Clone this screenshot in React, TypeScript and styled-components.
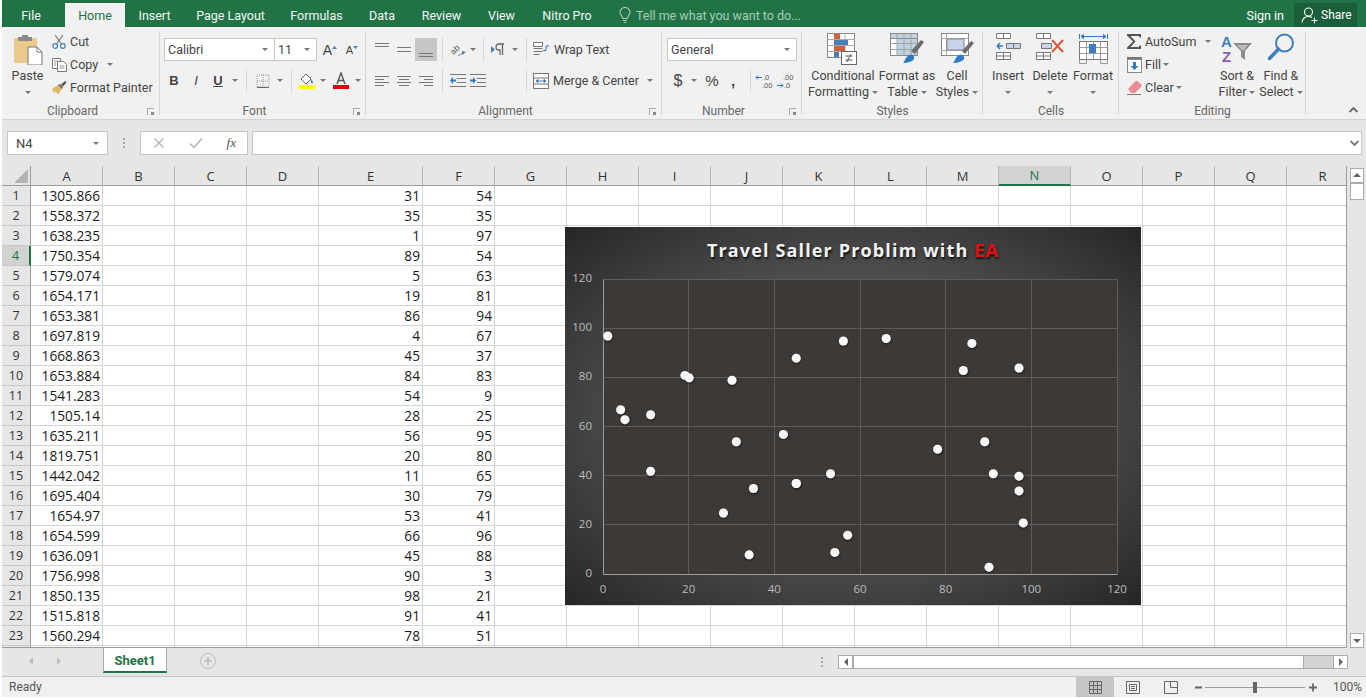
import React from 'react'
import styled, { createGlobalStyle } from 'styled-components'

const UI_FONT = 'Roboto, "Noto Sans", sans-serif'
const GREEN = '#217346'

const GlobalStyle = createGlobalStyle`
  html, body {
    margin: 0;
    padding: 0;
    background: #fff;
    overflow: hidden;
  }
`

const Window = styled.div`
  width: 1364px;
  height: 698px;
  margin-left: 2px;
  display: flex;
  flex-direction: column;
  overflow: hidden;
  font-family: ${UI_FONT};
  font-size: 12.5px;
  color: #444;
`

/* title tabs */
const TabBar = styled.div`
  height: 27px;
  flex: none;
  display: flex;
  align-items: flex-end;
  background: ${GREEN};
  color: #fff;
`

const Tab = styled.div<{ $w: number; $active?: boolean; $gap?: number }>`
  width: ${p => p.$w}px;
  margin-right: ${p => p.$gap ?? 0}px;
  height: 24px;
  display: flex;
  align-items: center;
  justify-content: center;
  font-size: 12.5px;
  background: ${p => (p.$active ? '#f1f1f1' : 'transparent')};
  color: ${p => (p.$active ? GREEN : '#f4f8f5')};
`

const TellMe = styled.div`
  height: 24px;
  padding-left: 13px;
  box-sizing: border-box;
  display: flex;
  align-items: center;
  gap: 5px;
  color: #a9cdb8;
`

const Spacer = styled.div`
  flex: 1;
`

const SignIn = styled.div`
  height: 24px;
  display: flex;
  align-items: center;
  margin-right: 10px;
`

const ShareButton = styled.div`
  width: 63px;
  height: 24px;
  margin-right: 9px;
  padding-left: 7px;
  box-sizing: border-box;
  display: flex;
  align-items: center;
  gap: 2px;
  font-size: 12px;
  background: #1b5e3a;
`

/* ribbon */
const Ribbon = styled.div`
  height: 93px;
  flex: none;
  box-sizing: border-box;
  display: flex;
  background: #f1f1f1;
  border-bottom: 1px solid #d2d2d2;
  position: relative;
`

const Group = styled.div<{ $w: number }>`
  width: ${p => p.$w}px;
  flex: none;
  display: flex;
  flex-direction: column;
  position: relative;
  &::after {
    content: '';
    position: absolute;
    right: 0;
    top: 4px;
    bottom: 4px;
    width: 1px;
    background: #d6d6d6;
  }
`

const GroupBody = styled.div<{ $pl?: number }>`
  height: 76px;
  display: flex;
  padding-left: ${p => p.$pl ?? 0}px;
`

const GroupLabel = styled.div<{ $launcher?: boolean }>`
  height: 16px;
  line-height: 16px;
  text-align: center;
  padding-right: ${p => (p.$launcher ? 17 : 0)}px;
  font-size: 12px;
  color: #666;
`

const Launcher = styled.div`
  position: absolute;
  right: 6px;
  bottom: 4px;
  width: 7px;
  height: 7px;
  border-left: 1px solid #aaa;
  border-top: 1px solid #aaa;
  box-sizing: border-box;
  &::after {
    content: '';
    position: absolute;
    right: 0;
    bottom: 0;
    width: 3px;
    height: 3px;
    background: #888;
  }
`

const CollapseSlot = styled.div`
  position: absolute;
  right: 8px;
  bottom: 3px;
`

const BigButton = styled.div<{ $w: number }>`
  width: ${p => p.$w}px;
  flex: none;
  padding-top: 6px;
  display: flex;
  flex-direction: column;
  align-items: center;
  line-height: 16px;
  white-space: nowrap;
`

const IconBox = styled.div`
  height: 35px;
  display: flex;
  align-items: flex-start;
  justify-content: center;
`

const Line = styled.div`
  height: 16px;
  display: flex;
  align-items: center;
  gap: 3px;
`

const SideColumn = styled.div<{ $w?: number }>`
  width: ${p => (p.$w ? `${p.$w}px` : 'auto')};
  flex: none;
  padding-top: 3px;
  display: flex;
  flex-direction: column;
`

const SideRow = styled.div`
  height: 23px;
  display: flex;
  align-items: center;
  white-space: nowrap;
`

const SideIcon = styled.div`
  width: 18px;
  flex: none;
  margin-right: 2px;
  display: flex;
  justify-content: center;
`

const Stack = styled.div`
  padding-top: 11px;
  display: flex;
  flex-direction: column;
  gap: 8px;
`

const ToolRow = styled.div`
  height: 23px;
  display: flex;
  align-items: center;
  white-space: nowrap;
`

const Tool = styled.div<{ $w: number; $on?: boolean }>`
  width: ${p => p.$w}px;
  height: 23px;
  flex: none;
  display: flex;
  align-items: center;
  justify-content: center;
  background: ${p => (p.$on ? '#c6c6c6' : 'transparent')};
`

const Sep = styled.div<{ $l?: number; $r?: number }>`
  width: 1px;
  height: 23px;
  flex: none;
  margin-left: ${p => p.$l ?? 5}px;
  margin-right: ${p => p.$r ?? 5}px;
  background: #d6d6d6;
`

const ComboBox = styled.div<{ $w: number }>`
  width: ${p => p.$w}px;
  height: 23px;
  flex: none;
  box-sizing: border-box;
  display: flex;
  align-items: center;
  justify-content: space-between;
  padding: 0 6px 0 3px;
  background: #fff;
  border: 1px solid #c6c6c6;
  & + & {
    border-left: none;
  }
`

const Caret = styled.span`
  display: inline-block;
  width: 0;
  height: 0;
  flex: none;
  border-left: 3px solid transparent;
  border-right: 3px solid transparent;
  border-top: 3px solid #777;
`

const Glyph = styled.span<{ $size?: number; $bold?: boolean; $italic?: boolean; $under?: boolean }>`
  font-size: ${p => p.$size ?? 13}px;
  font-weight: ${p => (p.$bold ? 700 : 400)};
  font-style: ${p => (p.$italic ? 'italic' : 'normal')};
  text-decoration: ${p => (p.$under ? 'underline' : 'none')};
  font-family: "Liberation Sans", sans-serif;
  color: #444;
`

const TextTool = styled.div`
  display: flex;
  align-items: center;
  gap: 4px;
`

/* formula bar */
const FormulaZone = styled.div`
  height: 46px;
  flex: none;
  box-sizing: border-box;
  padding: 11px 4px 11px 5px;
  display: flex;
  background: #e6e6e6;
`

const NameBox = styled.div`
  width: 101px;
  box-sizing: border-box;
  padding: 0 8px;
  font-size: 13px;
  display: flex;
  align-items: center;
  justify-content: space-between;
  background: #fff;
  border: 1px solid #c6c6c6;
`

const Grip = styled.div`
  width: 32px;
  display: flex;
  flex-direction: column;
  align-items: center;
  justify-content: center;
  gap: 2px;
`

const GripDot = styled.span`
  width: 2px;
  height: 2px;
  background: #a6a6a6;
`

const FormulaButtons = styled.div`
  width: 108px;
  box-sizing: border-box;
  margin-right: 4px;
  padding: 0 11px 0 12px;
  display: flex;
  align-items: center;
  justify-content: space-between;
  background: #fff;
  border: 1px solid #c6c6c6;
`

const FormulaInput = styled.div`
  flex: 1;
  box-sizing: border-box;
  padding-right: 2px;
  display: flex;
  align-items: center;
  justify-content: flex-end;
  background: #fff;
  border: 1px solid #c6c6c6;
`

const FxMark = styled.span`
  font-family: "Liberation Serif", serif;
  font-style: italic;
  font-size: 13px;
  color: #555;
`

/* sheet */
const SheetArea = styled.div`
  height: 482px;
  flex: none;
  display: flex;
  position: relative;
  background: #e6e6e6;
`

const SheetGrid = styled.div`
  width: 1345px;
  flex: none;
  height: 482px;
  box-sizing: border-box;
  overflow: hidden;
  display: grid;
  grid-template-columns: 29px 72px 72px 72px 72px 104px 72px repeat(12, 72px);
  grid-auto-rows: 20px;
  background: #fff;
  border-bottom: 1px solid #9c9c9c;
  border-right: 1px solid #9c9c9c;
  font-family: "Open Sans", "Noto Sans", sans-serif;
`

const Corner = styled.div`
  background: #e6e6e6;
  border-right: 1px solid #9c9c9c;
  border-bottom: 1px solid #9c9c9c;
  box-sizing: border-box;
  display: flex;
  align-items: flex-end;
  justify-content: flex-end;
  padding: 0 2px 2px 0;
`

const ColHead = styled.div<{ $on?: boolean }>`
  box-sizing: border-box;
  display: flex;
  align-items: center;
  justify-content: center;
  font-size: 13px;
  background: ${p => (p.$on ? '#d2d2d2' : '#e6e6e6')};
  color: ${p => (p.$on ? GREEN : '#333')};
  border-right: 1px solid #b4b4b4;
  border-bottom: ${p => (p.$on ? `2px solid ${GREEN}` : '1px solid #9c9c9c')};
`

const RowHead = styled.div<{ $on?: boolean }>`
  box-sizing: border-box;
  display: flex;
  align-items: center;
  justify-content: center;
  font-size: 12.5px;
  background: ${p => (p.$on ? '#d2d2d2' : '#e6e6e6')};
  color: ${p => (p.$on ? GREEN : '#333')};
  border-right: ${p => (p.$on ? `2px solid ${GREEN}` : '1px solid #9c9c9c')};
  border-bottom: 1px solid #c6c6c6;
`

const Cell = styled.div`
  box-sizing: border-box;
  padding-right: 2px;
  display: flex;
  align-items: center;
  justify-content: flex-end;
  font-size: 13.7px;
  color: #1a1a1a;
  border-right: 1px solid #d4d4d4;
  border-bottom: 1px solid #d4d4d4;
`

const VScroll = styled.div`
  flex: 1;
  padding: 2px 2px 0 3px;
  display: flex;
  flex-direction: column;
  align-items: stretch;
`

const ScrollBtn = styled.div`
  height: 15px;
  box-sizing: border-box;
  display: flex;
  align-items: center;
  justify-content: center;
  background: #fff;
  border: 1px solid #ababab;
`

const VThumb = styled.div`
  height: 17px;
  box-sizing: border-box;
  background: #fff;
  border: 1px solid #ababab;
`

const ChartFrame = styled.div`
  position: absolute;
  left: 563px;
  top: 61px;
  width: 576px;
  height: 378px;
  display: flex;
  flex-direction: column;
  background: radial-gradient(ellipse at center, #5a5a5a 0%, #4c4c4c 55%, #262626 100%);
`

const ChartTitle = styled.div`
  height: 46px;
  margin-bottom: -6px;
  flex: none;
  display: flex;
  align-items: center;
  justify-content: center;
  font-family: "Open Sans", "Noto Sans", sans-serif;
  font-size: 18px;
  font-weight: 700;
  letter-spacing: 1.15px;
  color: #f2f2f2;
  text-shadow: 1px 2px 2px #111;
  white-space: pre;
`

const ChartAccent = styled.span`
  color: #e4100f;
`

const AxisText = styled.text`
  font-family: "Open Sans", "Noto Sans", sans-serif;
  font-size: 11.5px;
  fill: #bdbdbd;
`

/* sheet tabs */
const SheetTabs = styled.div`
  height: 28px;
  flex: none;
  display: flex;
  background: #e6e6e6;
`

const NavSlot = styled.div`
  width: 101px;
  flex: none;
  box-sizing: border-box;
  padding: 0 40px 2px 25px;
  display: flex;
  align-items: center;
  justify-content: space-between;
`

const SheetTab = styled.div`
  width: 64px;
  height: 25px;
  padding-top: 2px;
  box-sizing: border-box;
  display: flex;
  align-items: center;
  justify-content: center;
  background: #fff;
  color: ${GREEN};
  font-weight: 700;
  font-size: 13px;
  border-left: 1px solid #ababab;
  border-right: 1px solid #ababab;
  border-bottom: 2px solid ${GREEN};
`

const AddSlot = styled.div`
  width: 82px;
  padding-bottom: 2px;
  box-sizing: border-box;
  display: flex;
  align-items: center;
  justify-content: center;
`

const HScrollZone = styled.div`
  flex: 1;
  padding: 7px 18px 7px 0;
  box-sizing: border-box;
  display: flex;
  justify-content: flex-end;
`

const HBtn = styled.div`
  width: 15px;
  box-sizing: border-box;
  display: flex;
  align-items: center;
  justify-content: center;
  background: #fff;
  border: 1px solid #ababab;
`

const HThumb = styled.div`
  width: 451px;
  box-sizing: border-box;
  background: #fff;
  border: 1px solid #ababab;
`

const HTrack = styled.div`
  width: 29px;
  background: #d4d4d4;
  border-top: 1px solid #ababab;
  border-bottom: 1px solid #ababab;
`

/* status bar */
const StatusBar = styled.div`
  height: 21px;
  flex: none;
  box-sizing: border-box;
  display: flex;
  align-items: stretch;
  background: #f0f0f0;
  border-top: 1px solid #c6c6c6;
`

const StatusText = styled.div`
  padding-left: 7px;
  width: 1074px;
  flex: none;
  box-sizing: border-box;
  display: flex;
  align-items: center;
  font-size: 12px;
  color: #555;
`

const ViewBtn = styled.div<{ $w: number; $on?: boolean }>`
  width: ${p => p.$w}px;
  flex: none;
  display: flex;
  align-items: center;
  justify-content: center;
  background: ${p => (p.$on ? '#c6c6c6' : 'transparent')};
`

const ZoomSlider = styled.div`
  width: 100px;
  margin: 0 4px 0 3px;
  flex: none;
  display: flex;
  align-items: center;
  justify-content: center;
  position: relative;
  &::before {
    content: '';
    position: absolute;
    left: 0;
    right: 0;
    top: 50%;
    height: 1px;
    background: #9a9a9a;
  }
`

const ZoomThumb = styled.div`
  width: 4px;
  height: 11px;
  background: #666;
  position: relative;
`

const ZoomMark = styled.div<{ $l?: number }>`
  width: 8px;
  margin-left: ${p => p.$l ?? 0}px;
  flex: none;
  display: flex;
  align-items: center;
  justify-content: center;
`

const ZoomPercent = styled.div`
  margin-left: 16px;
  display: flex;
  align-items: center;
  font-size: 12px;
  color: #555;
`

/* icons */
const Chevron = ({ color = '#777', up = false }: { color?: string; up?: boolean }) => (
  <svg width="9" height="6" viewBox="0 0 9 6">
    <path d={up ? 'M.5 5l4-4 4 4' : 'M.5 1l4 4 4-4'} fill="none" stroke={color} strokeWidth="1.800" />
  </svg>
)

const Bulb = () => (
  <svg width="12" height="17" viewBox="0 0 12 17" fill="none" stroke="#a9cdb8" strokeWidth="1.1">
    <path d="M3.8 11.5C3.5 9 1 8 1 5.5a5 5 0 0 1 10 0c0 2.5-2.5 3.5-2.8 6z" />
    <path d="M4 13.5h4M4.8 15.5h2.4" />
  </svg>
)

const ShareIcon = () => (
  <svg width="18" height="17" viewBox="0 0 18 17" fill="none" stroke="#fff" strokeWidth="1.1">
    <circle cx="7.5" cy="5" r="4" />
    <path d="M1 15.500c.5-3.500 3-6 6.500-6 1.500 0 2.600.4 3.500 1M13.500 10.500v6M10.500 13.500h6" />
  </svg>
)

const PasteIcon = () => (
  <svg width="30" height="32" viewBox="0 0 30 32">
    <rect x="1" y="5" width="23" height="25" rx="1.500" fill="#e9c98c" />
    <rect x="5" y="4" width="14" height="4" fill="#8a8a8a" />
    <rect x="9" y="2" width="6" height="3" fill="#8a8a8a" />
    <path d="M15 14h9l5 5v13H15z" fill="#fff" stroke="#777" />
    <path d="M24 14v5h5" fill="none" stroke="#777" />
  </svg>
)

const CutIcon = () => (
  <svg width="14" height="15" viewBox="0 0 14 15" fill="none">
    <path d="M3 1l6.500 9M11 1L4.500 10" stroke="#777" strokeWidth="1.200" />
    <circle cx="3.200" cy="12" r="2.300" stroke="#3f7fbf" strokeWidth="1.200" />
    <circle cx="10.800" cy="12" r="2.300" stroke="#3f7fbf" strokeWidth="1.200" />
  </svg>
)

const CopyIcon = () => (
  <svg width="15" height="14" viewBox="0 0 15 14" fill="#fff" stroke="#777">
    <path d="M.5.500h8v10h-8z" />
    <path d="M5.500 3.500h6l3 3v7h-9z" />
    <path d="M2 3h4M2 5h2M2 7h2M7.500 8h5M7.500 10h5" stroke="#999" />
  </svg>
)

const PainterIcon = () => (
  <svg width="17" height="15" viewBox="0 0 17 15">
    <path d="M1 9l6-4 4 4-4 5.500L4.500 11l-1.500 2z" fill="#e2b564" />
    <path d="M7 5l2-1 3 3-1 2z" fill="#666" />
    <path d="M10 4.500l4-3.500 1.500 1.500-3.500 4z" fill="#555" />
  </svg>
)

const GrowFont = ({ size, up }: { size: number; up: boolean }) => (
  <Tool $w={22}>
    <Glyph $size={size}>A</Glyph>
    <svg width="5" height="10" viewBox="0 0 5 10">
      <path d={up ? 'M0 4l2.500-3L5 4z' : 'M0 1h5L2.500 4z'} fill="#4a7fb5" />
    </svg>
  </Tool>
)

const BorderIcon = () => (
  <svg width="14" height="14" viewBox="0 0 14 14" stroke="#999" strokeDasharray="1 1" fill="none">
    <rect x="1" y="1" width="12" height="12" />
    <path d="M7 1v12M1 7h12" />
    <path d="M1 13.500h12" stroke="#666" strokeDasharray="none" />
  </svg>
)

const FillIcon = () => (
  <svg width="16" height="17" viewBox="0 0 16 17">
    <path d="M2 7l5-5 5 5-5 5z" fill="#fff" stroke="#666" />
    <path d="M12 7c1.500 2 2 3 2 3.500a1 1 0 0 1-2 0z" fill="#3f7fbf" />
    <rect x="0" y="13" width="16" height="4" fill="#ffff00" />
  </svg>
)

const ColorA = () => (
  <svg width="16" height="17" viewBox="0 0 16 17">
    <path d="M4 12L8 1l4 11M5.500 8.500h5" fill="none" stroke="#555" strokeWidth="1.400" />
    <rect x="0" y="13" width="16" height="4" fill="#e60000" />
  </svg>
)

const Lines = ({ rows }: { rows: number[][] }) => (
  <svg width="16" height="16" viewBox="0 0 16 16" stroke="#777">
    {rows.map(r => (
      <path key={r.join()} d={`M${r[0]} ${r[2]}.5H${r[1]}`} />
    ))}
  </svg>
)

const OrientIcon = () => (
  <svg width="20" height="18" viewBox="0 0 20 18" fill="none">
    <text x="2" y="11.500" fontSize="8.500" fill="#555" fontFamily="Liberation Sans, sans-serif" transform="rotate(-45 7 8.500)">ab</text>
    <path d="M10 15l5-3" stroke="#888" />
    <path d="M14 14l4-3-4-1z" fill="#4a7fb5" />
  </svg>
)

const ParaIcon = () => (
  <svg width="16" height="14" viewBox="0 0 16 14">
    <path d="M1 3l4 3.500L1 10z" fill="#4a7fb5" />
    <path d="M14 1H9a3 3 0 0 0 0 6h1v5M12.500 1v11" fill="none" stroke="#666" strokeWidth="1.300" />
  </svg>
)

const IndentIcon = ({ inc }: { inc: boolean }) => (
  <svg width="17" height="13" viewBox="0 0 17 13">
    <path d="M1 .5h16M8 4.500h9M8 8.500h9M1 12.500h16" stroke="#777" />
    <path d={inc ? 'M1 5.500h3V3l3 3.500L4 10V7.500H1z' : 'M7 5.500H4V3L1 6.500 4 10V7.500h3z'} fill="#2f78c4" />
  </svg>
)

const WrapIcon = () => (
  <svg width="17" height="16" viewBox="0 0 17 16" fill="#fff" stroke="#777">
    <path d="M.5.500h9v4h-9z" />
    <path d="M.5 6.500h9M.5 9.500h9M.5 12.500h6" />
    <path d="M16 4h-3v4.500H10" fill="none" stroke="#2f78c4" />
  </svg>
)

const MergeIcon = () => (
  <svg width="16" height="16" viewBox="0 0 16 16" fill="#fff" stroke="#777">
    <rect x=".5" y=".5" width="15" height="15" />
    <path d="M.5 5h15M.5 11h15" />
    <path d="M3 8h10M3 8l2-1.500v3zM13 8l-2-1.500v3z" stroke="#4a7fb5" fill="#4a7fb5" />
  </svg>
)

const DecimalIcon = ({ more }: { more: boolean }) => (
  <svg width="20" height="18" viewBox="0 0 20 18">
    <path
      d={more ? 'M1 5.500h6M1 5.500L3 3.500M1 5.500L3 7.500' : 'M1 13.500h6M7 13.500L5 11.500M7 13.500L5 15.500'}
      stroke="#2f78c4"
      fill="none"
    />
    <text x={more ? 8 : 7} y="8" fontSize="7.500" fill="#555" fontFamily="Liberation Sans, sans-serif">{more ? '.0' : '.00'}</text>
    <text x={more ? 7 : 8} y="16" fontSize="7.500" fill="#555" fontFamily="Liberation Sans, sans-serif">{more ? '.00' : '.0'}</text>
  </svg>
)

const CondIcon = () => (
  <svg width="32" height="33" viewBox="0 0 32 33">
    <rect x=".5" y=".5" width="27" height="24" fill="#fff" stroke="#888" />
    <path d="M9 .5v24M18 .5v24M.5 6.500h27M.5 12.500h27M.5 18.500h27" stroke="#aaa" />
    <rect x="7" y="1" width="6" height="5" fill="#d0603a" />
    <rect x="7" y="7" width="14" height="5" fill="#4a7fb5" />
    <rect x="7" y="13" width="11" height="5" fill="#d0603a" />
    <rect x="7" y="19" width="5" height="5" fill="#4a7fb5" />
    <rect x="14.500" y="18.500" width="15" height="13" fill="#fff" stroke="#666" />
    <path d="M18.500 23h7M18.500 27h7M24 21l-4 8" stroke="#555" fill="none" />
  </svg>
)

const TableIcon = () => (
  <svg width="34" height="33" viewBox="0 0 34 33">
    <rect x=".5" y=".5" width="27" height="22" fill="#fff" stroke="#888" />
    <rect x=".5" y=".5" width="27" height="5" fill="#c4d0e0" stroke="#888" />
    <rect x="7" y="6" width="20" height="16" fill="#c4d0e0" />
    <path d="M7 .5v22M14 .5v22M21 .5v22M.5 10.500h27M.5 16.500h27" stroke="#9aa" />
    <path d="M21 18l10-11 3 2-9 12z" fill="#6c6c6c" />
    <path d="M13 30c2-1 2-6 6-8 3-1 6 1 5 4-1 2-6 4-11 4z" fill="#2f78c4" />
  </svg>
)

const StylesIcon = () => (
  <svg width="33" height="33" viewBox="0 0 33 33">
    <rect x=".5" y=".5" width="27" height="22" fill="#fff" stroke="#888" />
    <path d="M5.500 .5v22M.5 5.500h27M.5 17.500h27" stroke="#aaa" />
    <rect x="6" y="6" width="17" height="11" fill="#c4d4ea" stroke="#888" />
    <path d="M21 18l9-10 3 2-9 11z" fill="#6c6c6c" />
    <path d="M12 30c2-1 2-6 6-8 3-1 6 1 5 4-1 2-6 4-11 4z" fill="#2f78c4" />
  </svg>
)

const InsertIcon = () => (
  <svg width="27" height="27" viewBox="0 0 27 27" fill="#fff" stroke="#777">
    <path d="M1.500 .5h14v5h-14zM8.500 .5v5" />
    <path d="M11.500 10.500h14v5h-14zM18.500 10.500v5" fill="#c6d6e8" />
    <path d="M8 13H2M2 13l3-3M2 13l3 3" stroke="#2f78c4" strokeWidth="1.500" fill="none" />
    <path d="M1.500 19.500h14v7h-14zM8.500 19.500v7M1.500 23h14" />
  </svg>
)

const DeleteIcon = () => (
  <svg width="30" height="27" viewBox="0 0 30 27" fill="#fff" stroke="#777">
    <path d="M1.500 .5h14v5h-14zM8.500 .5v5" />
    <path d="M6.500 10.500h10v5h-10z" fill="#c6d6e8" />
    <path d="M1.500 19.500h14v7h-14zM8.500 19.500v7M1.500 23h14" />
    <path d="M17 7l11 12M28 7L17 19" stroke="#d9593a" strokeWidth="2" fill="none" />
  </svg>
)

const FormatIcon = () => (
  <svg width="29" height="31" viewBox="0 0 29 31" fill="#fff" stroke="#777">
    <path d="M.5 1v5M28.500 1v5M2 3.500h25" stroke="#2f78c4" fill="none" />
    <path d="M2 3.500l2.500-2v4zM27 3.500l-2.500-2v4z" fill="#2f78c4" stroke="#2f78c4" />
    <rect x=".5" y="8.500" width="28" height="18" />
    <path d="M7.500 8.500v22M14.500 8.500v18M21.500 8.500v22M.5 14.500h28M.5 20.500h28" stroke="#999" />
    <rect x="10" y="11" width="7" height="9" fill="#3f7fbf" stroke="none" />
    <path d="M.5 26.500v4h7M21.500 30.500h7v-4" fill="none" stroke="#999" />
  </svg>
)

const SigmaIcon = () => (
  <svg width="16" height="15" viewBox="0 0 16 15">
    <path d="M1 0h14v3.500h-1.500L13 2H4.500l5 5.500L4.500 13H13l.5-1.500H15V15H1v-1.500L7 7.500 1 1.500z" fill="#555" />
  </svg>
)

const FillDownIcon = () => (
  <svg width="15" height="16" viewBox="0 0 15 16">
    <rect x=".5" y=".5" width="14" height="2" fill="#777" stroke="#777" />
    <rect x=".5" y="2.500" width="14" height="13" fill="#fff" stroke="#888" />
    <path d="M6 5h3v4h2.500l-4 4-4-4H6z" fill="#2f78c4" />
  </svg>
)

const EraserIcon = () => (
  <svg width="15" height="15" viewBox="0 0 15 15">
    <path d="M1 9l7-7.500c1-1 2-1 3 0l3 2.500c1 1 1 2 0 3L8 13H4z" fill="#e88f96" />
    <path d="M0 14.500h14" stroke="#777" />
  </svg>
)

const SortIcon = () => (
  <svg width="32" height="33" viewBox="0 0 32 33">
    <text x="0" y="14" fontSize="15" fontWeight="700" fill="#3f7fbf" fontFamily="Liberation Sans, sans-serif">A</text>
    <text x="1" y="29" fontSize="15" fontWeight="700" fill="#8a5fb0" fontFamily="Liberation Sans, sans-serif">Z</text>
    <path d="M12 10h19l-7 8v9l-4-3v-6z" fill="#8a8a8a" />
    <path d="M16 12h11l-5 6z" fill="#bdbdbd" />
  </svg>
)

const FindIcon = () => (
  <svg width="28" height="28" viewBox="0 0 28 28" fill="none">
    <circle cx="17.500" cy="10" r="8.500" stroke="#3f7fbf" strokeWidth="2" />
    <path d="M11.500 16L2.500 25.500" stroke="#3f7fbf" strokeWidth="3.500" strokeLinecap="round" />
  </svg>
)

const XMark = () => (
  <svg width="12" height="12" viewBox="0 0 12 12">
    <path d="M1.500 1.500l9 9M10.500 1.500l-9 9" stroke="#b4b4b4" strokeWidth="1.400" />
  </svg>
)

const CheckMark = () => (
  <svg width="14" height="12" viewBox="0 0 14 12">
    <path d="M1 6.500l4 4L13 1.500" fill="none" stroke="#b4b4b4" strokeWidth="1.500" />
  </svg>
)

const CornerMark = () => (
  <svg width="14" height="14" viewBox="0 0 14 14">
    <path d="M14 0v14H0z" fill="#b4b4b4" />
  </svg>
)

const Tri = ({ dir, color = '#666' }: { dir: 'up' | 'down' | 'left' | 'right'; color?: string }) => {
  const d = {
    up: 'M0 5l4-4 4 4z',
    down: 'M0 2h8L4 6z',
    left: 'M6 0v8L2 4z',
    right: 'M2 0v8l4-4z',
  }[dir]
  return (
    <svg width="8" height="8" viewBox="0 0 8 8">
      <path d={d} fill={color} />
    </svg>
  )
}

const AddSheet = () => (
  <svg width="16" height="16" viewBox="0 0 16 16" fill="none" stroke="#bdbdbd">
    <circle cx="8" cy="8" r="7.500" />
    <path d="M8 4v8M4 8h8" strokeWidth="1.500" />
  </svg>
)

const NormalView = () => (
  <svg width="13" height="13" viewBox="0 0 13 13" fill="none" stroke="#666">
    <path d="M.5.500h12v12H.5zM4.500.5v12M8.500.5v12M.5 4.500h12M.5 8.500h12" />
  </svg>
)

const PageView = () => (
  <svg width="14" height="13" viewBox="0 0 14 13" fill="none" stroke="#666">
    <path d="M.5.500h13v12H.5z" />
    <path d="M3.500 3.500h7v6h-7zM5 5.500h4M5 7.500h4" />
  </svg>
)

const BreakView = () => (
  <svg width="14" height="13" viewBox="0 0 14 13" fill="none" stroke="#666">
    <path d="M.5.500h13v12H.5zM6.500.5v6h7" />
  </svg>
)

const ZoomOut = () => (
  <svg width="7" height="3" viewBox="0 0 7 3">
    <rect width="7" height="2" y=".5" fill="#666" />
  </svg>
)

const ZoomIn = () => (
  <svg width="9" height="9" viewBox="0 0 9 9">
    <path d="M0 3.500h9v2H0zM3.500 0h2v9h-2z" fill="#666" />
  </svg>
)

/* data */
const COLS = ['A', 'B', 'C', 'D', 'E', 'F', 'G', 'H', 'I', 'J', 'K', 'L', 'M', 'N', 'O', 'P', 'Q', 'R']
const VALUES_A = ['1305.866', '1558.372', '1638.235', '1750.354', '1579.074', '1654.171', '1653.381', '1697.819', '1668.863', '1653.884', '1541.283', '1505.14', '1635.211', '1819.751', '1442.042', '1695.404', '1654.97', '1654.599', '1636.091', '1756.998', '1850.135', '1515.818', '1560.294']
const VALUES_E = [31, 35, 1, 89, 5, 19, 86, 4, 45, 84, 54, 28, 56, 20, 11, 30, 53, 66, 45, 90, 98, 91, 78]
const VALUES_F = [54, 35, 97, 54, 63, 81, 94, 67, 37, 83, 9, 25, 95, 80, 65, 79, 41, 96, 88, 3, 21, 41, 51]
const EXTRA_POINTS = [[11, 42], [34, 8], [42, 57], [57, 16], [97, 40], [97, 34], [97, 84], [45, 37]]
const ROWS = 24

const PLOT = { left: 38, right: 552, top: 52, bottom: 347 }
const px = (v: number) => PLOT.left + (v / 120) * (PLOT.right - PLOT.left)
const py = (v: number) => PLOT.bottom - (v / 120) * (PLOT.bottom - PLOT.top)
const TICKS = [0, 20, 40, 60, 80, 100, 120]

const Chart = () => {
  const points = [...VALUES_E.map((e, i) => [e, VALUES_F[i]]), ...EXTRA_POINTS]
  const toX = Math.floor(px(0)) + 0.5
  const toY = Math.floor(py(0)) + 0.5
  return (
    <ChartFrame>
      <ChartTitle>Travel Saller Problim with <ChartAccent>EA</ChartAccent></ChartTitle>
      <svg width="576" height="338" viewBox="0 40 576 338">
        <defs>
          <filter id="dot" x="-50%" y="-50%" width="200%" height="200%">
            <feDropShadow dx="0.5" dy="1" stdDeviation="1" floodColor="#000" floodOpacity="0.7" />
          </filter>
        </defs>
        <rect x={toX} y={PLOT.top + 0.5} width={PLOT.right - PLOT.left} height={PLOT.bottom - PLOT.top} fill="#3d3937" />
        {TICKS.slice(1).map(t => (
          <g key={t} stroke="#5f5b59">
            <path d={`M${toX} ${Math.floor(py(t)) + 0.5}H${PLOT.right + 0.5}`} />
            <path d={`M${Math.floor(px(t)) + 0.5} ${PLOT.top + 0.5}V${toY}`} />
          </g>
        ))}
        <path d={`M${toX} ${PLOT.top + 0.5}V${toY}H${PLOT.right + 0.5}`} fill="none" stroke="#9c9c9c" />
        {TICKS.map(t => (
          <AxisText key={`y${t}`} x={27} y={py(t) + 3} textAnchor="end">{t}</AxisText>
        ))}
        {TICKS.map(t => (
          <AxisText key={`x${t}`} x={px(t)} y={366} textAnchor="middle">{t}</AxisText>
        ))}
        <g filter="url(#dot)" fill="#f8f8f8">
          {points.map(([x, y]) => (
            <circle key={`${x}-${y}`} cx={px(x) + 0.5} cy={py(y) + 0.5} r={4.5} />
          ))}
        </g>
      </svg>
    </ChartFrame>
  )
}

const Sheet = () => (
  <SheetGrid>
    <Corner><CornerMark /></Corner>
    {COLS.map(c => <ColHead key={c} $on={c === 'N'}>{c}</ColHead>)}
    {Array.from({ length: ROWS }, (_, r) => (
      <React.Fragment key={r}>
        <RowHead $on={r === 3}>{r < ROWS - 1 && r + 1}</RowHead>
        {COLS.map(c => (
          <Cell key={c}>
            {c === 'A' && VALUES_A[r]}
            {c === 'E' && VALUES_E[r]}
            {c === 'F' && VALUES_F[r]}
          </Cell>
        ))}
      </React.Fragment>
    ))}
  </SheetGrid>
)

const App = () => (
  <Window>
    <GlobalStyle />
    <TabBar>
      <Tab $w={58} $gap={5}>File</Tab>
      <Tab $w={60} $active>Home</Tab>
      <Tab $w={59}>Insert</Tab>
      <Tab $w={93}>Page Layout</Tab>
      <Tab $w={79}>Formulas</Tab>
      <Tab $w={52}>Data</Tab>
      <Tab $w={67}>Review</Tab>
      <Tab $w={53}>View</Tab>
      <Tab $w={78}>Nitro Pro</Tab>
      <TellMe><Bulb />Tell me what you want to do...</TellMe>
      <Spacer />
      <SignIn>Sign in</SignIn>
      <ShareButton><ShareIcon />Share</ShareButton>
    </TabBar>

    <Ribbon>
      <Group $w={158}>
        <GroupBody $pl={3}>
          <BigButton $w={45}>
            <IconBox><PasteIcon /></IconBox>
            <Line>Paste</Line>
            <Line><Caret /></Line>
          </BigButton>
          <SideColumn>
            <SideRow><SideIcon><CutIcon /></SideIcon>Cut</SideRow>
            <SideRow><SideIcon><CopyIcon /></SideIcon>Copy<Tool $w={24}><Caret /></Tool></SideRow>
            <SideRow><SideIcon><PainterIcon /></SideIcon>Format Painter</SideRow>
          </SideColumn>
        </GroupBody>
        <GroupLabel $launcher>Clipboard</GroupLabel>
        <Launcher />
      </Group>

      <Group $w={206}>
        <GroupBody $pl={3}>
          <Stack>
            <ToolRow>
              <Tool $w={1} />
              <ComboBox $w={111}>Calibri<Caret /></ComboBox>
              <ComboBox $w={42}>11<Caret /></ComboBox>
              <Tool $w={2} />
              <GrowFont size={14} up />
              <GrowFont size={11} up={false} />
            </ToolRow>
            <ToolRow>
              <Tool $w={22}><Glyph $bold>B</Glyph></Tool>
              <Tool $w={22}><Glyph $italic>I</Glyph></Tool>
              <Tool $w={22}><Glyph $bold $under>U</Glyph></Tool>
              <Tool $w={12}><Caret /></Tool>
              <Sep />
              <Tool $w={22}><BorderIcon /></Tool>
              <Tool $w={12}><Caret /></Tool>
              <Sep />
              <Tool $w={20}><FillIcon /></Tool>
              <Tool $w={12}><Caret /></Tool>
              <Tool $w={24}><ColorA /></Tool>
              <Tool $w={10}><Caret /></Tool>
            </ToolRow>
          </Stack>
        </GroupBody>
        <GroupLabel $launcher>Font</GroupLabel>
        <Launcher />
      </Group>

      <Group $w={296}>
        <GroupBody $pl={5}>
          <Stack>
            <ToolRow>
              <Tool $w={22}><Lines rows={[[1, 15, 1], [1, 15, 4]]} /></Tool>
              <Tool $w={22}><Lines rows={[[1, 15, 5], [1, 15, 9]]} /></Tool>
              <Tool $w={22} $on><Lines rows={[[1, 15, 11], [1, 15, 14]]} /></Tool>
              <Sep />
              <Tool $w={20}><OrientIcon /></Tool>
              <Tool $w={10}><Caret /></Tool>
              <Sep $r={4} />
              <Tool $w={20}><ParaIcon /></Tool>
              <Tool $w={14}><Caret /></Tool>
              <Sep $l={4} $r={6} />
              <TextTool><WrapIcon />Wrap Text</TextTool>
            </ToolRow>
            <ToolRow>
              <Tool $w={22}><Lines rows={[[1, 15, 3], [1, 10, 6], [1, 15, 9], [1, 10, 12]]} /></Tool>
              <Tool $w={22}><Lines rows={[[1, 15, 3], [3, 13, 6], [1, 15, 9], [3, 13, 12]]} /></Tool>
              <Tool $w={22}><Lines rows={[[1, 15, 3], [6, 15, 6], [1, 15, 9], [6, 15, 12]]} /></Tool>
              <Sep $r={4} />
              <Tool $w={20}><IndentIcon inc={false} /></Tool>
              <Tool $w={20}><IndentIcon inc /></Tool>
              <Sep $l={39} $r={6} />
              <TextTool><MergeIcon />Merge &amp; Center</TextTool>
              <Tool $w={22}><Caret /></Tool>
            </ToolRow>
          </Stack>
        </GroupBody>
        <GroupLabel $launcher>Alignment</GroupLabel>
        <Launcher />
      </Group>

      <Group $w={140}>
        <GroupBody $pl={5}>
          <Stack>
            <ToolRow>
              <ComboBox $w={130}>General<Caret /></ComboBox>
            </ToolRow>
            <ToolRow>
              <Tool $w={22}><Glyph $size={16}>$</Glyph></Tool>
              <Tool $w={10}><Caret /></Tool>
              <Tool $w={26}><Glyph $size={15}>%</Glyph></Tool>
              <Tool $w={16}><Glyph $size={15} $bold>,</Glyph></Tool>
              <Sep $l={9} $r={4} />
              <Tool $w={20}><DecimalIcon more /></Tool>
              <Tool $w={22}><DecimalIcon more={false} /></Tool>
            </ToolRow>
          </Stack>
        </GroupBody>
        <GroupLabel $launcher>Number</GroupLabel>
        <Launcher />
      </Group>

      <Group $w={181}>
        <GroupBody $pl={3}>
          <BigButton $w={76}>
            <IconBox><CondIcon /></IconBox>
            <Line>Conditional</Line>
            <Line>Formatting<Caret /></Line>
          </BigButton>
          <BigButton $w={52}>
            <IconBox><TableIcon /></IconBox>
            <Line>Format as</Line>
            <Line>Table<Caret /></Line>
          </BigButton>
          <BigButton $w={48}>
            <IconBox><StylesIcon /></IconBox>
            <Line>Cell</Line>
            <Line>Styles<Caret /></Line>
          </BigButton>
        </GroupBody>
        <GroupLabel>Styles</GroupLabel>
      </Group>

      <Group $w={136}>
        <GroupBody $pl={4}>
          <BigButton $w={42}>
            <IconBox><InsertIcon /></IconBox>
            <Line>Insert</Line>
            <Line><Caret /></Line>
          </BigButton>
          <BigButton $w={42}>
            <IconBox><DeleteIcon /></IconBox>
            <Line>Delete</Line>
            <Line><Caret /></Line>
          </BigButton>
          <BigButton $w={44}>
            <IconBox><FormatIcon /></IconBox>
            <Line>Format</Line>
            <Line><Caret /></Line>
          </BigButton>
        </GroupBody>
        <GroupLabel>Cells</GroupLabel>
      </Group>

      <Group $w={187}>
        <GroupBody $pl={6}>
          <SideColumn $w={89}>
            <SideRow><SideIcon><SigmaIcon /></SideIcon>AutoSum<Tool $w={24}><Caret /></Tool></SideRow>
            <SideRow><SideIcon><FillDownIcon /></SideIcon>Fill<Tool $w={10}><Caret /></Tool></SideRow>
            <SideRow><SideIcon><EraserIcon /></SideIcon>Clear<Tool $w={10}><Caret /></Tool></SideRow>
          </SideColumn>
          <BigButton $w={46}>
            <IconBox><SortIcon /></IconBox>
            <Line>Sort &amp;</Line>
            <Line>Filter<Caret /></Line>
          </BigButton>
          <BigButton $w={42}>
            <IconBox><FindIcon /></IconBox>
            <Line>Find &amp;</Line>
            <Line>Select<Caret /></Line>
          </BigButton>
        </GroupBody>
        <GroupLabel>Editing</GroupLabel>
      </Group>

      <CollapseSlot><Chevron up color="#666" /></CollapseSlot>
    </Ribbon>

    <FormulaZone>
      <NameBox>N4<Caret /></NameBox>
      <Grip><GripDot /><GripDot /><GripDot /></Grip>
      <FormulaButtons><XMark /><CheckMark /><FxMark>fx</FxMark></FormulaButtons>
      <FormulaInput><Chevron /></FormulaInput>
    </FormulaZone>

    <SheetArea>
      <Sheet />
      <VScroll>
        <ScrollBtn><Tri dir="up" /></ScrollBtn>
        <VThumb />
        <Spacer />
        <ScrollBtn><Tri dir="down" /></ScrollBtn>
      </VScroll>
      <Chart />
    </SheetArea>

    <SheetTabs>
      <NavSlot><Tri dir="left" color="#bdbdbd" /><Tri dir="right" color="#bdbdbd" /></NavSlot>
      <SheetTab>Sheet1</SheetTab>
      <AddSlot><AddSheet /></AddSlot>
      <HScrollZone>
        <Grip><GripDot /><GripDot /><GripDot /></Grip>
        <HBtn><Tri dir="left" /></HBtn>
        <HThumb />
        <HTrack />
        <HBtn><Tri dir="right" /></HBtn>
      </HScrollZone>
    </SheetTabs>

    <StatusBar>
      <StatusText>Ready</StatusText>
      <ViewBtn $w={38} $on><NormalView /></ViewBtn>
      <ViewBtn $w={38}><PageView /></ViewBtn>
      <ViewBtn $w={38}><BreakView /></ViewBtn>
      <ZoomMark $l={4}><ZoomOut /></ZoomMark>
      <ZoomSlider><ZoomThumb /></ZoomSlider>
      <ZoomMark><ZoomIn /></ZoomMark>
      <ZoomPercent>100%</ZoomPercent>
    </StatusBar>
  </Window>
)

export default App
